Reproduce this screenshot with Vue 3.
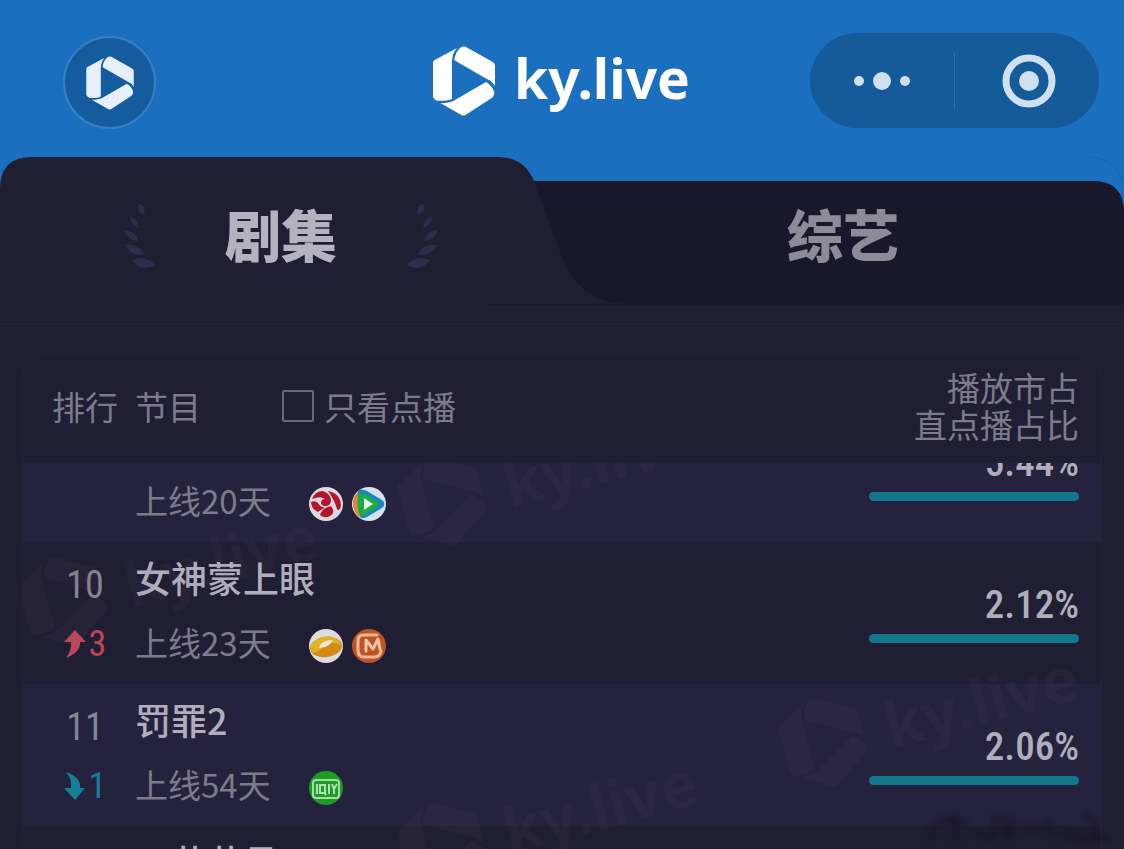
<script setup>
import { ref, h } from 'vue'

const activeTab = ref('series')
const onDemandOnly = ref(false)

const rows = [
  { id: 9, rank: '', name: '', days: '上线20天', share: '5.44%', ratio: 100, platforms: ['sohu', 'tencent'] },
  { id: 10, rank: '10', name: '女神蒙上眼', days: '上线23天', share: '2.12%', ratio: 100, trend: 'up', step: 3, platforms: ['mango', 'imgo'] },
  { id: 11, rank: '11', name: '罚罪2', days: '上线54天', share: '2.06%', ratio: 100, trend: 'down', step: 1, platforms: ['iqiyi'] },
  { id: 12, rank: '', name: '五花花昌', days: '', share: '', ratio: 0, platforms: [] }
]

const marks = ['a', 'b', 'c', 'd']

const logoPaths = [
  'M0 50Q0 44 5 41L72 5Q58 20 57 44V157Q48 163 22 163H12Q0 158 0 148Z',
  'M82 4Q93 -3 103 4L178 46Q186 50 186 58V120Q178 104 160 97L64 42Q66 18 82 4Z',
  'M159 107Q178 118 184 138Q184 150 176 155L101 204Q93 210 85 206L22 170Q48 170 62 163Z'
]
const LogoMark = () =>
  h('svg', { viewBox: '-1 -1 188 210', fill: 'currentColor', 'aria-hidden': 'true' },
    logoPaths.map(d => h('path', { d })))

const leaves = [
  'M17 1Q22 6 20 12Q13 9 14 2Z',
  'M6 13Q14 16 15 25Q7 23 6 13Z',
  'M0 27Q12 28 14 38Q4 38 0 27Z',
  'M1 42Q14 40 20 51Q8 55 1 42Z',
  'M8 57Q22 51 31 62Q18 70 8 57Z'
]
const Laurel = () =>
  h('svg', { viewBox: '0 0 31 68', fill: 'currentColor', 'aria-hidden': 'true' },
    leaves.map(d => h('path', { d })))
</script>

<template>
  <div class="page">
    <header class="topbar">
      <button class="home" type="button" aria-label="首页"><LogoMark class="home-mark" /></button>
      <div class="brand">
        <LogoMark class="brand-mark" />
        <span>ky.live</span>
      </div>
      <div class="capsule">
        <button type="button" aria-label="更多">
          <svg width="58" height="20" viewBox="0 0 58 20" fill="currentColor"><circle cx="6" cy="10" r="5" /><circle cx="29" cy="10" r="9" /><circle cx="52" cy="10" r="5" /></svg>
        </button>
        <i class="divider"></i>
        <button type="button" aria-label="关闭">
          <svg class="target" width="54" height="54" viewBox="0 0 54 54"><circle cx="27" cy="27" r="23" fill="none" stroke="currentColor" stroke-width="7" /><circle cx="27" cy="27" r="10" fill="currentColor" /></svg>
        </button>
      </div>
    </header>

    <main class="board">
      <nav class="tabs">
        <svg class="tab-shape" viewBox="0 0 1124 166" preserveAspectRatio="none" aria-hidden="true">
          <path d="M0 166V32Q0 0 32 0H498Q524 0 534 24H1092Q1124 24 1124 56V166Z" fill="#201e33" />
          <path d="M534 24H1092Q1124 24 1124 56V147H632C590 147 573 126 561 98Q555 80 534 24Z" fill="#19172a" />
          <path d="M489 147.5H1124" stroke="#1a182b" />
          <path d="M1090 0Q1118 2 1124 28" fill="none" stroke="#1b64a8" />
        </svg>
        <button type="button" class="tab" :class="{ active: activeTab === 'series' }" @click="activeTab = 'series'">
          <Laurel class="laurel" />
          <span>剧集</span>
          <Laurel class="laurel flip" />
        </button>
        <button type="button" class="tab" :class="{ active: activeTab === 'variety' }" @click="activeTab = 'variety'">
          <span>综艺</span>
        </button>
      </nav>

      <section class="panel">
        <table>
          <thead>
            <tr>
              <th class="rank-col">排行</th>
              <th class="name-col">
                <div class="name-head">
                  <span>节目</span>
                  <label><input v-model="onDemandOnly" type="checkbox" />只看点播</label>
                </div>
              </th>
              <th class="share-col">播放市占<br />直点播占比</th>
            </tr>
          </thead>
          <tbody>
            <tr v-for="row in rows" :key="row.id">
              <td class="rank-col">
                <div class="rank">{{ row.rank }}</div>
                <div v-if="row.trend" class="trend" :class="row.trend">
                  <svg v-if="row.trend === 'up'" width="22" height="28" viewBox="0 0 22 28" fill="currentColor"><path d="M11 0L22 12H16Q17 22 2 28Q8 20 7 12H0Z" /></svg>
                  <svg v-else width="22" height="28" viewBox="0 0 22 28" fill="currentColor"><path d="M2 0Q17 5 16 16H21L11 28L0 16H7Q8 7 2 0Z" /></svg>
                  <span>{{ row.step }}</span>
                </div>
              </td>
              <td class="name-col">
                <div class="title">{{ row.name }}</div>
                <div class="meta">
                  <span>{{ row.days }}</span>
                  <div class="platforms">
                    <svg v-for="p in row.platforms" :key="p" width="34" height="34" viewBox="0 0 34 34">
                      <g v-if="p === 'sohu'">
                        <circle cx="17" cy="17" r="17" fill="#dcd9e2" />
                        <path d="M3 12Q6 4 14 4Q22 7 22 14Q21 20 15 19Q10 17 13 13Q15 11 17 13Q13 8 3 12Z" fill="#b5152b" />
                        <path d="M19 4Q31 6 32 18Q31 25 28 22Q25 12 19 4Z" fill="#b5152b" />
                        <path d="M11 28Q13 21 22 19Q27 26 21 29Q16 32 11 28Z" fill="#b5152b" />
                        <path d="M2 15Q6 13 9 16Q11 20 16 21Q11 23 9 25Q3 23 2 15Z" fill="#b5152b" />
                      </g>
                      <g v-else-if="p === 'tencent'">
                        <circle cx="17" cy="17" r="17" fill="#d5e4f3" />
                        <path d="M8 4Q0 8 1 18Q2 28 9 31L15 17Z" fill="#e0873c" />
                        <path d="M6 4Q9 1 15 4L30 13Q35 17 30 21L15 30Q10 33 8 29Q5 17 6 4Z" fill="#1c86bd" />
                        <path d="M7 6Q10 5 14 8L25 14Q28 17 25 20L12 28Q8 29 7 25Q4 16 7 6Z" fill="#1bad45" />
                        <path d="M12 11L21 17L12 23Z" fill="#e4f5e7" />
                      </g>
                      <g v-else-if="p === 'mango'">
                        <circle cx="17" cy="17" r="17" fill="#dedbe0" />
                        <ellipse cx="17" cy="18" rx="16" ry="10" fill="#d48b13" transform="rotate(-7 17 18)" />
                        <path d="M1 18Q5 8 19 7Q30 8 32 16Q18 10 12 20Q7 25 3 23Z" fill="#dfb326" />
                        <path d="M10 19Q12 11 24 11Q21 18 10 19Z" fill="#f2e7d8" />
                      </g>
                      <g v-else-if="p === 'imgo'">
                        <circle cx="17" cy="17" r="17" fill="#bd5423" />
                        <path d="M25 6H11Q6 6 6 12V21Q6 28 12 28H22Q28 28 29 22" fill="none" stroke="#efb999" stroke-width="3" stroke-linecap="round" />
                        <path d="M14 22V11L21 20L26 10L28 20" fill="none" stroke="#f3c4a8" stroke-width="3" stroke-linejoin="round" stroke-linecap="round" />
                      </g>
                      <g v-else>
                        <circle cx="17" cy="17" r="17" fill="#1d9c24" />
                        <rect x="4" y="9" width="26" height="18" rx="3" fill="none" stroke="#a5d9aa" stroke-width="2" />
                        <path d="M8 13V23M11 14H16V22H11ZM15 21L17 24M20 13V23M23 13L25 18L28 13M25 18V23" fill="none" stroke="#b5dfb9" stroke-width="2" />
                      </g>
                    </svg>
                  </div>
                </div>
              </td>
              <td class="share-col">
                <div class="share">{{ row.share }}</div>
                <div v-if="row.ratio" class="track"><i :style="{ width: row.ratio + '%' }"></i></div>
              </td>
            </tr>
          </tbody>
        </table>
        <div class="marks" aria-hidden="true">
          <div v-for="m in marks" :key="m" class="mark" :class="m">
            <LogoMark class="mark-logo" /><span>ky.live</span>
          </div>
        </div>
      </section>
    </main>

    <svg class="smudge" width="200" height="50" viewBox="0 0 200 50" aria-hidden="true">
      <g fill="none" stroke="#14121f" stroke-width="5" stroke-linecap="round">
        <path d="M12 40Q14 18 34 20M30 24H48M38 16V40M58 34L70 38M76 18V38M84 16L88 38M94 20V36M104 28H124M130 22L136 38M144 32H160M166 16Q180 18 176 36M150 40H188" />
      </g>
    </svg>
  </div>
</template>

<style>
body {
  margin: 0;
  background: #201e33;
}
</style>

<style scoped>
.page {
  position: relative;
  display: flex;
  flex-direction: column;
  height: 100vh;
  overflow: hidden;
  background: #1b6fbf;
  color: #7d7b8b;
  font-family: "Noto Sans CJK SC", "Noto Sans", sans-serif;
}
button {
  padding: 0;
  border: 0;
  background: none;
  color: inherit;
  font: inherit;
  cursor: pointer;
}
svg {
  display: block;
  flex: none;
}
.topbar {
  display: grid;
  grid-template-columns: 1fr auto 1fr;
  align-items: center;
  height: 96px;
  padding: 33px 25px 28px 63px;
}
.home {
  display: grid;
  place-items: center;
  align-self: end;
  box-sizing: border-box;
  width: 93px;
  height: 93px;
  border: 2px solid #3580c5;
  border-radius: 50%;
  background: #155c9f;
  color: #e6f0fa;
}
.home-mark {
  width: 48px;
  height: 54px;
}
.brand {
  display: flex;
  align-items: center;
  gap: 18px;
  margin-right: 40px;
  color: #fff;
  font: 700 55px/72px "Noto Sans", "Open Sans", sans-serif;
}
.brand span {
  padding-bottom: 6px;
}
.brand-mark {
  width: 64px;
  height: 70px;
}
.capsule {
  display: flex;
  align-items: center;
  align-self: start;
  justify-self: end;
  width: 289px;
  height: 95px;
  border-radius: 48px;
  background: #155a99;
  color: #cfe0f1;
}
.capsule button {
  display: grid;
  flex: 1;
  place-items: center;
  height: 95px;
}
.target {
  margin-left: 4px;
}
.divider {
  width: 1px;
  height: 58px;
  background: #2c70ab;
}
.board {
  display: flex;
  flex: 1;
  flex-direction: column;
  min-height: 0;
}
.tabs {
  position: relative;
  display: grid;
  grid-template-columns: 1fr 1fr;
  height: 166px;
  border-bottom: 2px solid #252339;
}
.tab-shape {
  position: absolute;
  inset: 0;
  width: 100%;
  height: 166px;
}
.tab {
  position: relative;
  display: flex;
  align-items: center;
  justify-content: center;
  gap: 70px;
  height: 160px;
  color: #8d8b97;
  font-size: 56px;
  font-weight: 900;
  line-height: 64px;
}
.tab span {
  padding-bottom: 8px;
}
.tab.active {
  color: #b3b2be;
}
.laurel {
  width: 31px;
  height: 68px;
  color: #2f2c4c;
}
.flip {
  transform: scaleX(-1);
}
.panel {
  position: relative;
  display: flex;
  flex: 1;
  min-height: 0;
  padding: 28px 22px 0;
  background: #201e33;
}
table {
  display: flex;
  flex: 1;
  flex-direction: column;
  box-sizing: border-box;
  overflow: hidden;
  border: 1px solid #262439;
  border-bottom: 0;
  border-radius: 24px 24px 0 0;
}
thead,
tbody {
  display: block;
}
tbody {
  flex: 1;
  min-height: 0;
  overflow: hidden;
}
tr {
  display: grid;
  grid-template-columns: 112px 1fr 232px;
}
thead tr {
  align-items: center;
  box-sizing: border-box;
  height: 109px;
  padding-bottom: 5px;
}
th,
td {
  padding: 0;
  text-align: left;
}
th {
  color: #7d7b8b;
  font-size: 33px;
  font-weight: 400;
  line-height: 37px;
}
tbody tr {
  height: 142px;
  background: #201e33;
}
tbody tr:nth-child(odd) {
  background: #25223e;
}
tbody tr:first-child {
  margin-top: -63px;
}
th.rank-col,
td.rank-col {
  padding-left: 12px;
  text-align: center;
}
th.share-col,
td.share-col {
  padding-right: 22px;
  text-align: right;
}
.name-head {
  display: flex;
  align-items: center;
  gap: 81px;
}
.name-head label {
  display: flex;
  align-items: center;
  gap: 10px;
}
.name-head input {
  width: 32px;
  height: 32px;
  margin: 0;
  appearance: none;
  border: 2px solid #6a6878;
  border-radius: 2px;
}
.rank {
  height: 48px;
  padding-top: 19px;
  color: #868494;
  font: 400 38px/48px "Roboto Condensed", Roboto, sans-serif;
}
.trend {
  display: flex;
  align-items: center;
  justify-content: center;
  gap: 3px;
  padding-top: 13px;
  font: 400 36px/44px "Roboto Condensed", Roboto, sans-serif;
}
.up {
  color: #bd4659;
}
.down {
  color: #16809a;
}
.title {
  height: 48px;
  padding-top: 11px;
  color: #b0aebd;
  font-size: 36px;
  font-weight: 500;
  line-height: 48px;
}
.meta {
  display: flex;
  align-items: center;
  gap: 38px;
  padding-top: 19px;
  font-size: 33px;
  line-height: 44px;
}
.platforms {
  display: flex;
  gap: 9px;
  padding-top: 7px;
}
.share {
  height: 40px;
  padding-top: 43px;
  color: #b0aebd;
  font: 500 39px/40px "Roboto Condensed", Roboto, sans-serif;
}
.track {
  height: 9px;
  margin-top: 9px;
}
.track i {
  display: block;
  height: 9px;
  border-radius: 5px;
  background: #12778b;
}
.marks {
  position: absolute;
  inset: 138px 22px 0;
  overflow: hidden;
  pointer-events: none;
}
.mark {
  position: absolute;
  display: flex;
  align-items: center;
  gap: 22px;
  color: rgba(125, 120, 125, 0.07);
  font: 700 62px/92px "Noto Sans", "Open Sans", sans-serif;
  transform: rotate(-15deg);
  transform-origin: 42px 46px;
}
.mark-logo {
  width: 82px;
  height: 92px;
}
.mark.a { left: 380px; top: -8px; }
.mark.b { left: 1px; top: 92px; }
.mark.c { left: 761px; top: 233px; }
.mark.d { left: 380px; top: 338px; }
.smudge {
  position: absolute;
  right: 6px;
  bottom: 0;
  opacity: 0.6;
  filter: blur(3px);
}
</style>
